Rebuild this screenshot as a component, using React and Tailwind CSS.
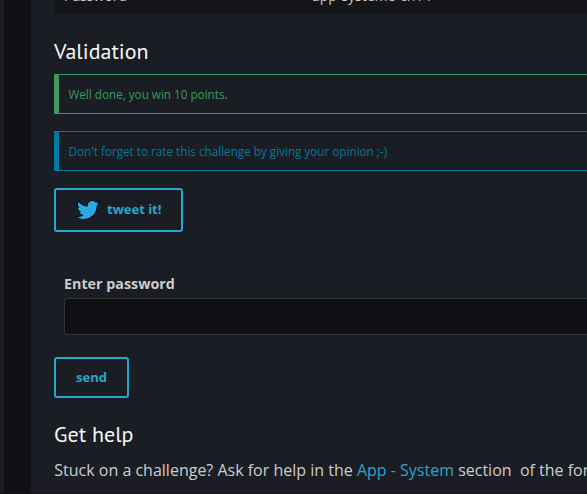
import { FaTwitter } from "react-icons/fa";

function Heading({ children }) {
  return (
    <h3 className="h-[30px] whitespace-nowrap font-['PT_Sans','Noto_Sans',sans-serif] text-[22px] leading-[30px] text-[#f8f8f8]">
      {children}
    </h3>
  );
}

export default function App() {
  return (
    <div className="flex h-[494px] w-full overflow-hidden border-b border-[#1c0d1c] bg-[#1a1d24] font-['Open_Sans',sans-serif] text-[#cdcdcd]">
      <div className="ml-1 w-[27px] shrink-0 bg-[#0f1013]" />
      <main className="min-w-0 flex-1 pl-[23px]">
        <div className="flex h-3.5 items-end overflow-hidden bg-[#131519] pl-2.5 text-sm leading-5">
          <span className="mb-2 w-[248px] shrink-0">Password</span>
          <span className="mb-2">app-systeme-ch14</span>
        </div>
        <div className="mt-[22px]">
          <Heading>Validation</Heading>
        </div>
        <div className="mt-2 flex h-10 items-center border-y border-l-[5px] border-[#3c9a5f] pl-[9.5px] pt-px text-[11.7px] text-[#3c9a5f]">
          Well done, you win 10 points.
        </div>
        <div className="mt-[17px] flex h-10 items-center border-y border-l-[5px] border-[#007a9e] pl-[9.5px] pt-px text-[11.7px] text-[#007a9e]">
          Don't forget to rate this challenge by giving your opinion ;-)
        </div>
        <button className="mt-[17px] flex h-11 w-[129px] items-center rounded-[3px] border-2 border-[#2ba6cb] pl-[21px] text-[13px] font-bold text-[#2ba6cb]">
          <FaTwitter className="mr-2 h-[22px] w-[22px] overflow-visible fill-[#2ca7e0] stroke-black stroke-[30] [paint-order:stroke]" />
          tweet it!
        </button>
        <label className="mt-[42px] block pl-2.5 text-[14.3px] font-bold leading-5">Enter password</label>
        <div className="ml-2.5 mt-1 h-[37px] rounded-l border border-r-0 border-[#333] bg-[#0f1013]" />
        <button className="mt-[22px] block h-[41px] w-[75px] rounded-[3px] border-2 border-[#2ba6cb] text-[13px] font-bold text-[#2ba6cb]">
          send
        </button>
        <div className="mt-[21px]">
          <Heading>Get help</Heading>
        </div>
        <p className="mt-[9px] whitespace-pre pl-[0.3px] text-base leading-6">
          Stuck on a challenge? Ask for help in the <a className="text-[#2ba6cb]">App - System</a>
          {" section  of the forum"}
        </p>
      </main>
    </div>
  );
}
